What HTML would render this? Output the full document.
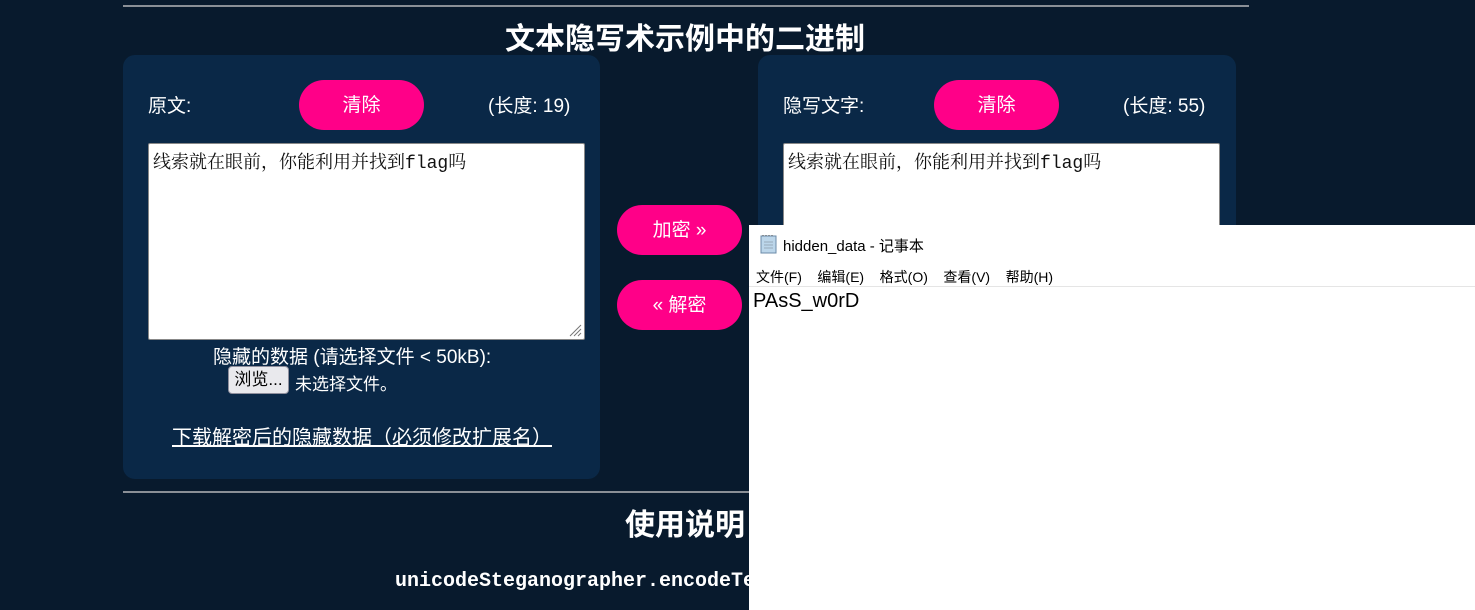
<!DOCTYPE html>
<html><head><meta charset="utf-8"><style>
*{margin:0;padding:0;box-sizing:border-box}
body{width:1475px;height:610px;overflow:hidden;background:#081a2d;position:relative;font-family:"Liberation Sans","Noto Sans CJK SC",sans-serif;color:#fff}
.a{position:absolute}
.line{position:absolute;left:123px;width:1126px;height:2px;background:#8a8f96}
.h{position:absolute;font-weight:bold;font-size:30px;width:1370px;left:0;text-align:center}
.panel{position:absolute;background:#0a2847;border-radius:12px}
.btn{position:absolute;background:#ff0088;border-radius:25px;width:125px;height:50px;text-align:center;line-height:52px;font-size:19px;color:#fff}
.lbl{position:absolute;font-size:19px}
.ta{position:absolute;background:#fff;border:1px solid #888;border-radius:2px;color:#111;font-family:"Liberation Mono","Noto Serif CJK SC",serif;font-size:18px;padding:4px 4px}
</style></head><body>
<div class="line" style="top:5px"></div>
<div class="h" style="top:14px;">文本隐写术示例中的二进制</div>
<div class="panel" style="left:123px;top:55px;width:477px;height:424px"></div>
<div class="panel" style="left:758px;top:55px;width:478px;height:424px"></div>
<div class="lbl" style="left:148px;top:91px">原文:</div>
<div class="btn" style="left:299px;top:80px">清除</div>
<div class="lbl" style="left:488px;top:91px">(长度: 19)</div>
<div class="ta" style="left:148px;top:143px;width:437px;height:197px"><span style="font-family:'Noto Serif CJK SC',serif">线索就在眼前，你能利用并找到</span>flag<span style="font-family:'Noto Serif CJK SC',serif">吗</span>
<svg class="a" style="right:2px;bottom:2px" width="14" height="14"><path d="M2 13L13 2M6 13L13 6M10 13L13 10" stroke="#777" stroke-width="1"/></svg></div>
<div class="lbl" style="left:213px;top:342px;font-size:19px">隐藏的数据 (请选择文件 &lt; 50kB):</div>
<div class="a" style="left:228px;top:366px;width:61px;height:28px;background:#e9e9ed;border:1px solid #8f8f9d;border-radius:4px;color:#000;font-size:17px;line-height:26px;text-align:center">浏览...</div>
<div class="a" style="left:295px;top:370px;font-size:17px">未选择文件。</div>
<div class="a" style="left:172px;top:421px;font-size:20px;text-decoration:underline">下载解密后的隐藏数据（必须修改扩展名）</div>
<div class="btn" style="left:617px;top:205px">加密 »</div>
<div class="btn" style="left:617px;top:280px">« 解密</div>
<div class="lbl" style="left:783px;top:91px">隐写文字:</div>
<div class="btn" style="left:934px;top:80px">清除</div>
<div class="lbl" style="left:1123px;top:91px">(长度: 55)</div>
<div class="ta" style="left:783px;top:143px;width:437px;height:197px"><span style="font-family:'Noto Serif CJK SC',serif">线索就在眼前，你能利用并找到</span>flag<span style="font-family:'Noto Serif CJK SC',serif">吗</span></div>
<div class="line" style="top:491px"></div>
<div class="h" style="top:500px;">使用说明</div>
<div class="a" style="left:395px;top:570px;font-family:'Liberation Mono','DejaVu Sans Mono',monospace;font-size:20px;font-weight:bold">unicodeSteganographer.encodeText</div>
<div class="a" style="left:749px;top:225px;width:726px;height:385px;background:#fff;color:#000">
<svg class="a" style="left:10px;top:9px" width="20" height="20"><rect x="2" y="2" width="15" height="17" fill="#bcd6ea" stroke="#6b8ba8"/><path d="M4 2v-1M7 2v-1M10 2v-1M13 2v-1" stroke="#555"/><path d="M5 8h9M5 11h9M5 14h9" stroke="#9ab"/></svg>
<div class="a" style="left:34px;top:10px;font-size:15px">hidden_data - 记事本</div>
<div class="a" style="left:7px;top:42px;font-size:14px;word-spacing:0">文件(F)&nbsp;&nbsp;&nbsp; 编辑(E)&nbsp;&nbsp;&nbsp; 格式(O)&nbsp;&nbsp;&nbsp; 查看(V)&nbsp;&nbsp;&nbsp; 帮助(H)</div>
<div class="a" style="left:0;top:61px;width:726px;height:1px;background:#e5e5e5"></div>
<div class="a" style="left:4px;top:65px;font-size:20px">PAsS_w0rD</div>
</div>
</body></html>
